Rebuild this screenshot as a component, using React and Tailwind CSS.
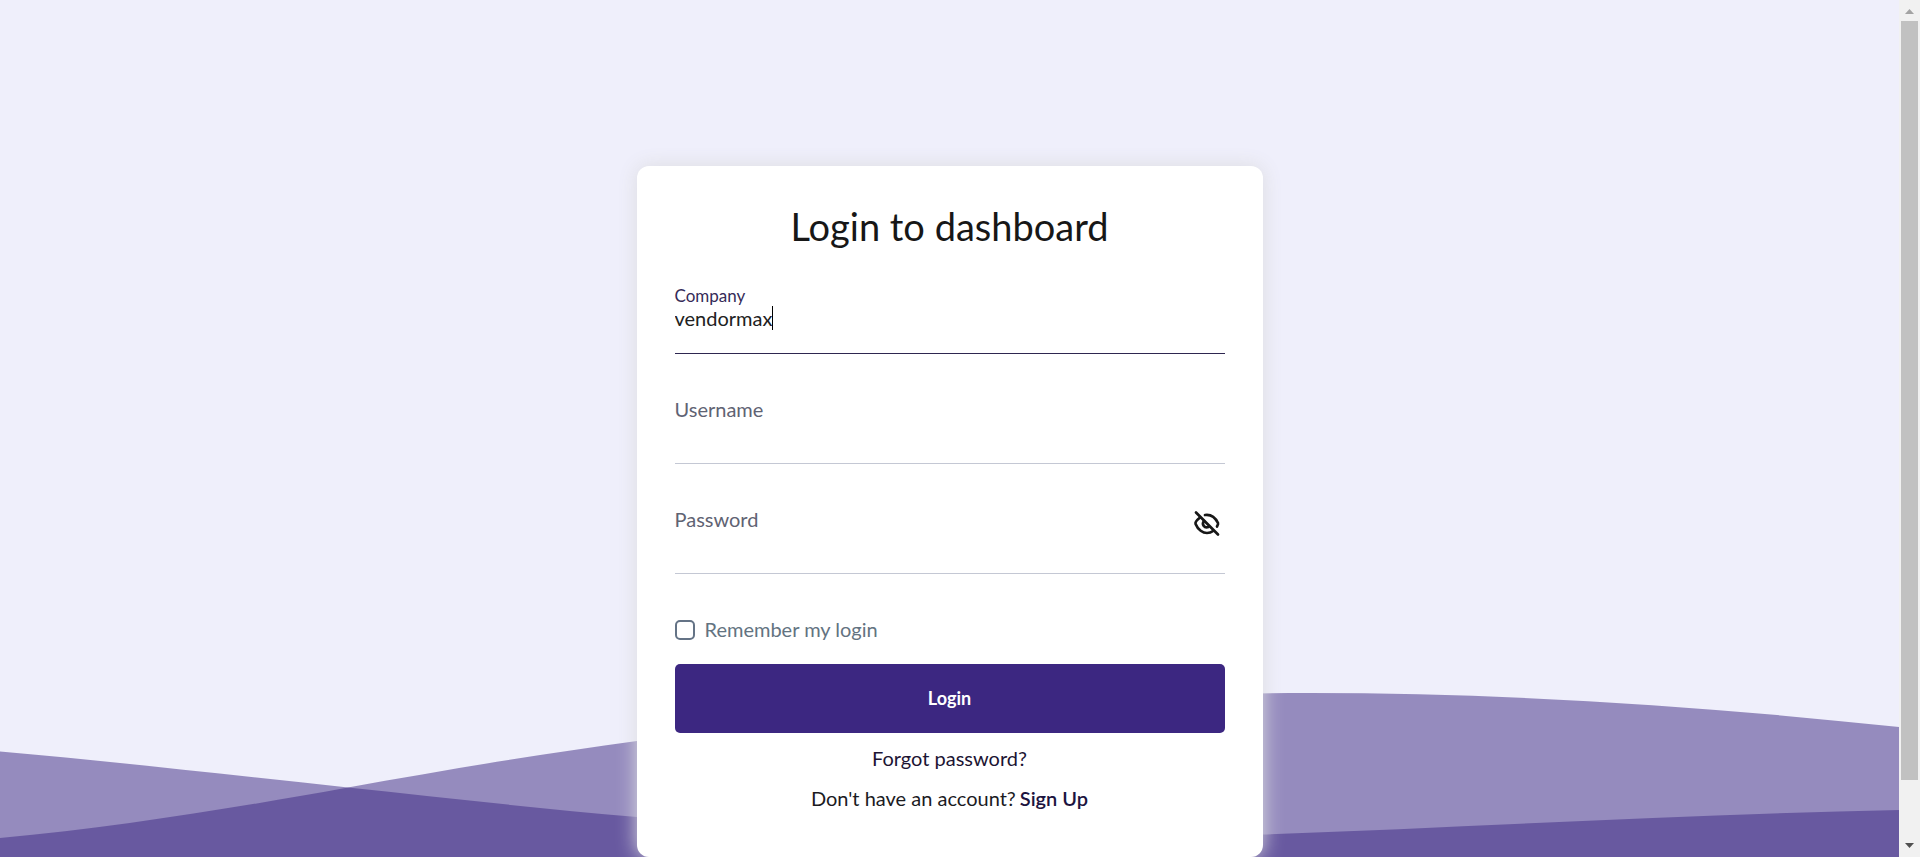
import { useState } from "react";

function Waves() {
  return (
    <svg
      className="absolute inset-x-0 bottom-0 -z-10 h-[177px] w-full"
      viewBox="0 0 1899 177"
      preserveAspectRatio="none"
      aria-hidden="true"
    >
      <g fill="#3c2781" fillOpacity="0.5">
        <path d="M0 71.500C120 82 230 95 348 107.500C445 117.500 540 129 637 137C850 156 1050 164 1262 154.500C1480 147 1690 134 1899 130V177H0Z" />
        <path d="M0 158C120 147 240 127 348 107.500C445 90 540 74 637 61C860 31 1080 13 1309 13C1510 13 1700 26 1899 47V177H0Z" />
      </g>
    </svg>
  );
}

function EyeOffIcon() {
  return (
    <svg
      className="size-7"
      viewBox="0 0 28 28"
      fill="none"
      stroke="currentColor"
      strokeWidth="2.7"
      strokeLinecap="round"
      aria-hidden="true"
    >
      <path d="M3 2.500 25 24.500" />
      <path d="M12 5C19 4 23 9 25 13Q25.400 14 24 16.500" />
      <path d="M7 7.500C4.500 9.500 2 12.500 2.600 14C5 20 10 23 14 23C16.500 23 18.500 22.200 20 21" />
      <path d="M11 11C8.500 14 11 18.500 15.500 17" />
    </svg>
  );
}

function Field({ id, label, type = "text", active = false, value, children, ...rest }) {
  return (
    <div
      className={`relative flex h-[88px] border-b ${active ? "border-[#2e2750]" : "border-[#c4c8d4]"}`}
    >
      <label
        htmlFor={id}
        className={
          active
            ? "absolute left-0 top-5 text-[17px] leading-5 text-[#352b58]"
            : "absolute left-0 top-[21px] text-xl leading-6 text-[#5f6373]"
        }
      >
        {label}
      </label>
      <input
        id={id}
        type={type}
        value={value}
        className={`w-full bg-transparent pb-2 pt-6 text-xl text-[#212121] outline-none ${active ? "caret-transparent" : "caret-black"}`}
        {...rest}
      />
      {active && (
        <div className="pointer-events-none absolute left-0 top-10 flex h-6 text-xl leading-6" aria-hidden="true">
          <span className="invisible whitespace-pre">{value}</span>
          <span className="h-6 w-px bg-black" />
        </div>
      )}
      {children}
    </div>
  );
}

function Scrollbar() {
  return (
    <div className="flex w-[21px] shrink-0 flex-col items-center bg-[#f1f1f1]" aria-hidden="true">
      <svg className="h-[21px] w-[9px] shrink-0" viewBox="0 0 9 21">
        <path d="M0 14 4.500 9 9 14Z" fill="#a3a3a3" />
      </svg>
      <div className="w-[17px] grow bg-[#c1c1c1]" />
      <div className="h-[56px] shrink-0" />
      <svg className="h-[21px] w-[9px] shrink-0" viewBox="0 0 9 21">
        <path d="M0 7 4.500 12 9 7Z" fill="#505050" />
      </svg>
    </div>
  );
}

export default function App() {
  const [company, setCompany] = useState("vendormax");
  const [username, setUsername] = useState("");
  const [password, setPassword] = useState("");
  const [visible, setVisible] = useState(false);

  return (
    <div className="flex h-screen overflow-hidden font-['Lato',sans-serif]">
      <main className="relative isolate flex grow flex-col items-center bg-[#efeffb] px-4 pt-[166px]">
        <Waves />
        <form
          className="w-full max-w-[626px] shrink-0 rounded-xl bg-white px-[38px] pb-[43px] pt-[35px] shadow-[0_0_20px_#dcdce0]"
          onSubmit={(event) => event.preventDefault()}
        >
          <h1 className="text-center text-[38px] leading-[50px] text-[#171717]">Login to dashboard</h1>
          <div className="mt-[15px] flex flex-col gap-[22px]">
            <Field
              id="company"
              label="Company"
              active
              value={company}
              onChange={(event) => setCompany(event.target.value)}
            />
            <Field
              id="username"
              label="Username"
              value={username}
              onChange={(event) => setUsername(event.target.value)}
            />
            <Field
              id="password"
              label="Password"
              type={visible ? "text" : "password"}
              value={password}
              onChange={(event) => setPassword(event.target.value)}
            >
              <button
                type="button"
                aria-label="Toggle password visibility"
                onClick={() => setVisible(!visible)}
                className="mb-3 mr-1 self-center text-[#171717]"
              >
                <EyeOffIcon />
              </button>
            </Field>
          </div>
          <div className="mt-[43px] flex items-center gap-[10px]">
            <input
              id="remember"
              type="checkbox"
              className="size-5 appearance-none rounded-[5px] border-2 border-[#647386] checked:bg-[#3c2781]"
            />
            <label htmlFor="remember" className="pb-0.5 text-xl leading-6 text-[#637381]">
              Remember my login
            </label>
          </div>
          <button
            type="submit"
            className="mt-[21px] h-[69px] w-full rounded-[5px] bg-[#3c2781] pb-0.5 text-lg font-bold text-white"
          >
            Login
          </button>
          <p className="mt-[9px] text-center text-xl leading-8 text-[#1c1433]">
            <a href="#forgot">Forgot password?</a>
          </p>
          <p className="mt-2 text-center text-xl leading-8 text-[#1b1b1f]">
            Don't have an account?
            <a href="#signup" className="ml-1 font-semibold text-[#1c1440]">
              Sign Up
            </a>
          </p>
        </form>
      </main>
      <Scrollbar />
    </div>
  );
}
